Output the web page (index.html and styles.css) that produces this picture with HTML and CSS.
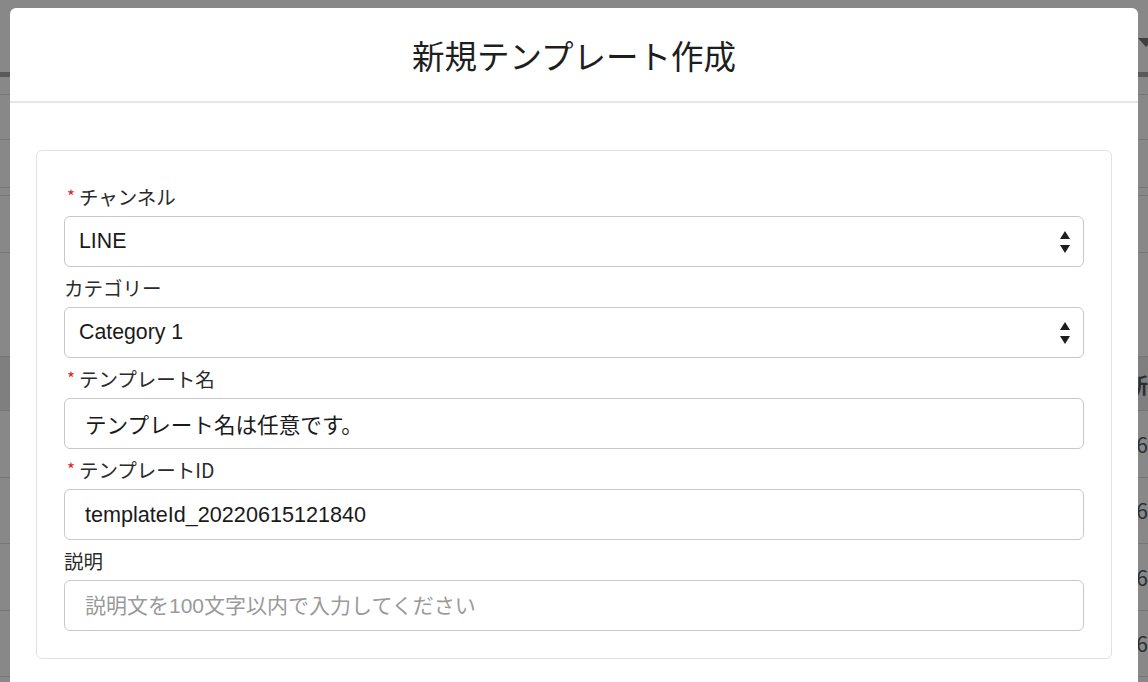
FILE: index.html
```html
<!DOCTYPE html>
<html lang="ja">
<head>
<meta charset="utf-8">
<title>新規テンプレート作成</title>
<link rel="stylesheet" href="styles.css">
</head>
<body>
<div class="backdrop">
  <div class="bg-top"><span class="bg-caret"></span></div>
  <div class="bg-band"></div>
  <div class="bg-row h18"></div>
  <div class="bg-row h45"></div>
  <div class="bg-row h48"></div>
  <div class="bg-row h8"></div>
  <div class="bg-row h57"></div>
  <div class="bg-row h104"></div>
  <div class="bg-head"><span class="bg-text">作成日時 新</span></div>
  <div class="bg-trow"><span class="bg-text">2022/06</span></div>
  <div class="bg-trow"><span class="bg-text">2022/06</span></div>
  <div class="bg-trow"><span class="bg-text">2022/06</span></div>
  <div class="bg-trow"><span class="bg-text">2022/06</span></div>
</div>

<div class="modal">
  <div class="modal-header">
    <h1 class="modal-title">新規テンプレート作成</h1>
  </div>
  <div class="modal-body">
    <div class="card">
      <div class="label"><span class="req">*</span>チャンネル</div>
      <div class="field select">
        <span class="select-text">LINE</span>
        <svg class="arrows" width="12" height="24" viewBox="0 0 12 24"><path d="M6 1 L11 9 L1 9 Z" fill="#1d1d1d"/><path d="M1 15 L11 15 L6 23 Z" fill="#1d1d1d"/></svg>
      </div>
      <div class="label">カテゴリー</div>
      <div class="field select">
        <span class="select-text">Category 1</span>
        <svg class="arrows" width="12" height="24" viewBox="0 0 12 24"><path d="M6 1 L11 9 L1 9 Z" fill="#1d1d1d"/><path d="M1 15 L11 15 L6 23 Z" fill="#1d1d1d"/></svg>
      </div>
      <div class="label"><span class="req">*</span>テンプレート名</div>
      <input class="field input" type="text" value="テンプレート名は任意です。">
      <div class="label"><span class="req">*</span>テンプレートID</div>
      <input class="field input" type="text" value="templateId_20220615121840">
      <div class="label">説明</div>
      <input class="field input input-desc" type="text" placeholder="説明文を100文字以内で入力してください">
    </div>
  </div>
</div>
</body>
</html>
```
FILE: styles.css
```css
html, body {
  margin: 0;
  padding: 0;
  height: 100%;
  overflow: hidden;
  background: #888888;
  font-family: "Liberation Sans", "Noto Sans CJK JP", sans-serif;
}

/* page behind the overlay */
.backdrop {
  display: flex;
  flex-direction: column;
}
.bg-top {
  height: 72px;
  display: flex;
  justify-content: flex-end;
  align-items: flex-start;
}
.bg-caret {
  margin-top: 38px;
  margin-right: -6px;
  width: 0;
  height: 0;
  border-left: 8px solid transparent;
  border-right: 8px solid transparent;
  border-top: 9px solid #3f3f3f;
}
.bg-band {
  height: 5px;
  background: #5a5a5a;
}
.bg-row {
  box-sizing: border-box;
  border-bottom: 1px solid #767676;
}
.h18 { height: 18px; }
.h45 { height: 45px; }
.h48 { height: 48px; }
.h8 { height: 8px; }
.h57 { height: 57px; }
.h104 { height: 104px; }
.bg-head {
  height: 54px;
  box-sizing: border-box;
  background: #7f7f7f;
  border-bottom: 1px solid #767676;
  display: flex;
  align-items: center;
  justify-content: flex-end;
  font-weight: bold;
}
.bg-trow {
  height: 66.5px;
  box-sizing: border-box;
  border-bottom: 1px solid #767676;
  display: flex;
  align-items: center;
  justify-content: flex-end;
}
.bg-text {
  font-size: 21px;
  color: #2e2e2e;
  white-space: nowrap;
  font-family: "Noto Sans CJK JP", sans-serif;
}

/* modal */
.modal {
  position: absolute;
  left: 10px;
  top: 8px;
  width: 1128px;
  height: 720px;
  background: #ffffff;
  border-radius: 6px 6px 0 0;
}
.modal-header {
  height: 93px;
  display: flex;
  align-items: center;
  justify-content: center;
  border-bottom: 2px solid #e6e6e6;
}
.modal-title {
  margin: 0;
  font-size: 32.5px;
  font-weight: normal;
  color: #1e1e1e;
  font-family: "Noto Sans CJK JP", sans-serif;
}
.modal-body {
  padding: 47px 26px 0;
}
.card {
  border: 1px solid #e2e2e2;
  border-radius: 6px;
  padding: 25px 27px 27px;
  display: flex;
  flex-direction: column;
}
.label {
  height: 40px;
  display: flex;
  align-items: center;
  font-size: 19.5px;
  color: #2a2a2a;
  font-family: "Noto Sans CJK JP", sans-serif;
}
.req {
  color: #e0262b;
  font-size: 17px;
  margin: 0 4px 0 3px;
  position: relative;
  top: -1px;
}
.field {
  height: 51px;
  box-sizing: border-box;
  border: 1px solid #c8c8c8;
  border-radius: 6px;
  background: #ffffff;
  margin: 0;
  width: 100%;
}
.select {
  display: flex;
  align-items: center;
  justify-content: space-between;
  padding: 0 12px 0 14px;
}
.select-text {
  font-size: 21.3px;
  color: #1a1a1a;
}
.input {
  padding: 0 20px;
  font-size: 21.6px;
  color: #1a1a1a;
  font-family: "Liberation Sans", "Noto Sans CJK JP", sans-serif;
  outline: none;
}
.input-desc {
  font-size: 21px;
}
.input::placeholder {
  color: #9a9a9a;
}
```
